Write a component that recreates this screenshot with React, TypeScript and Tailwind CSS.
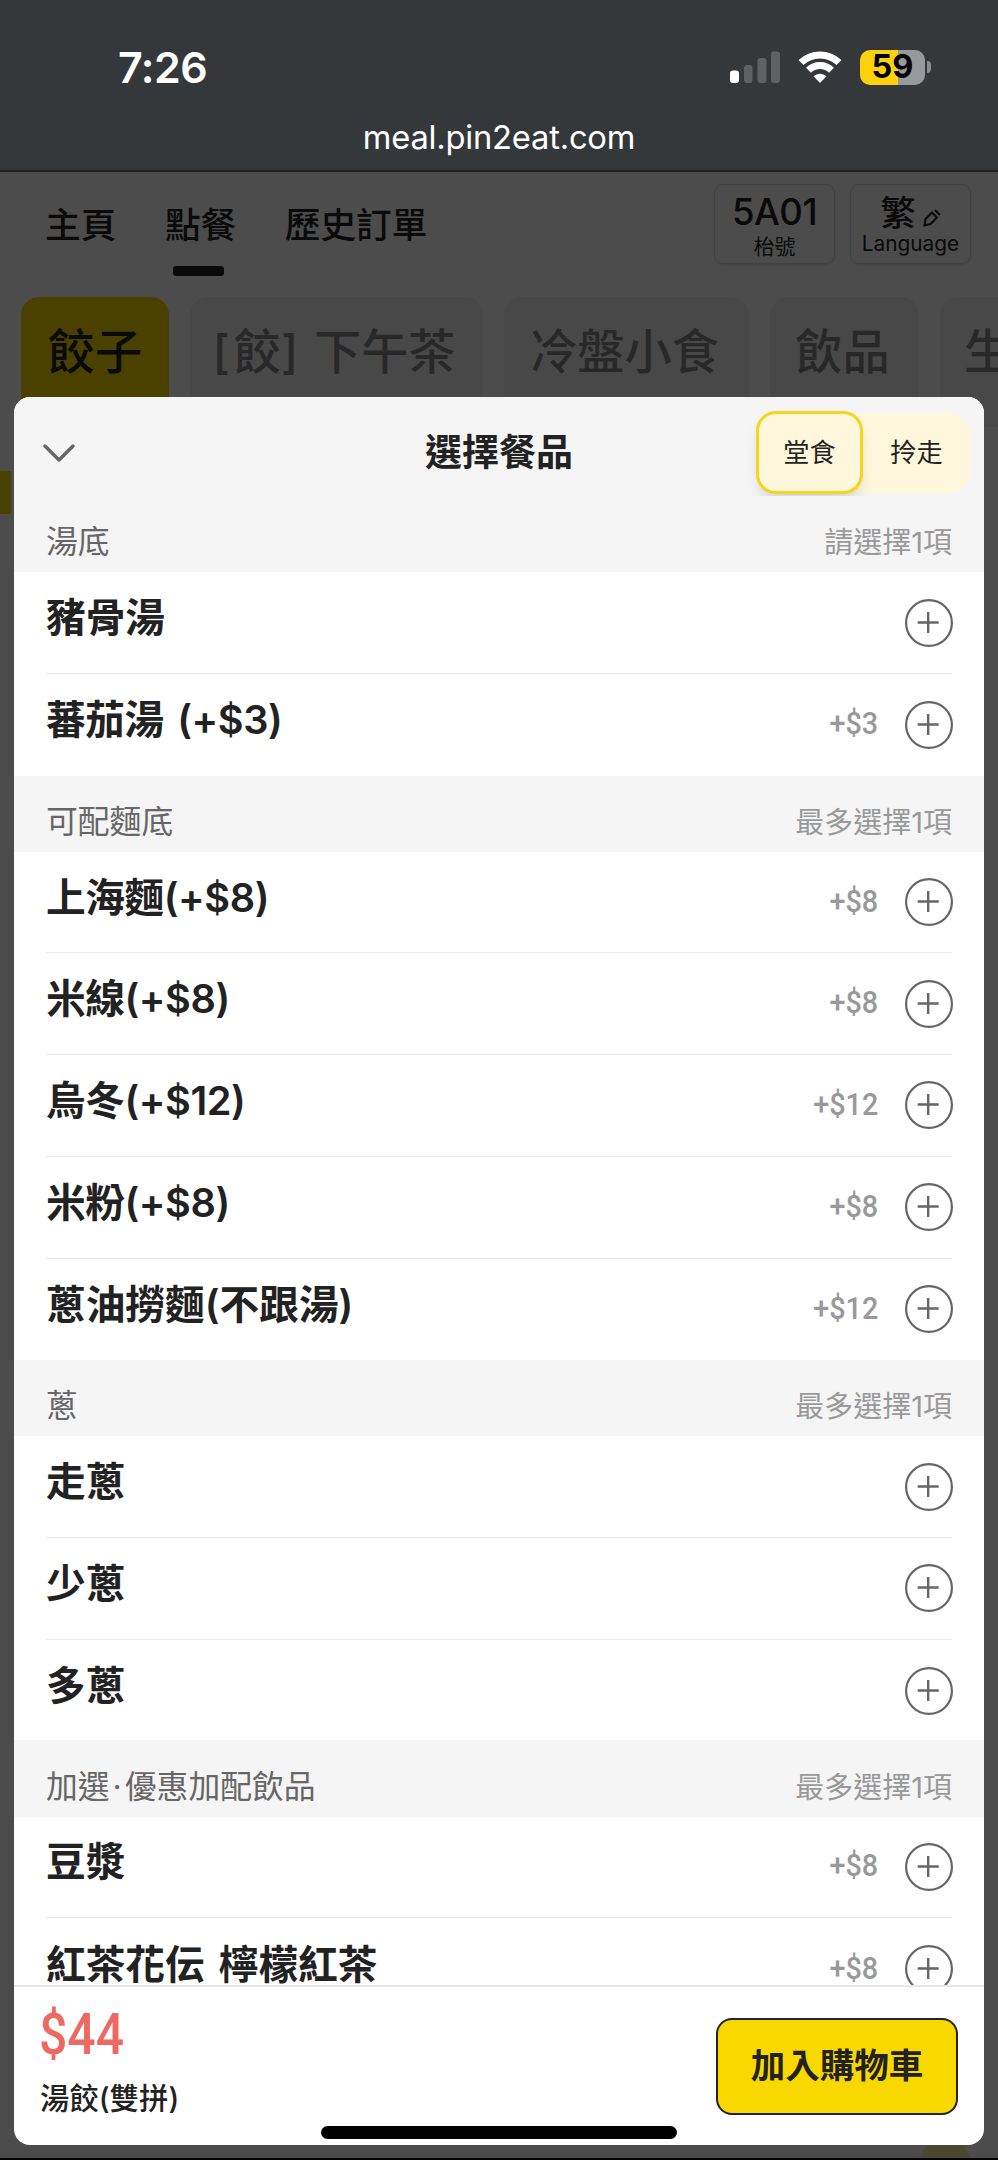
import { ChevronDown } from "lucide-react";

interface Item {
  name: string;
  price?: string;
}

interface Group {
  title: string;
  hint: string;
  items: Item[];
}

const groups: Group[] = [
  {
    title: "湯底",
    hint: "請選擇1項",
    items: [{ name: "豬骨湯" }, { name: "蕃茄湯 (+$3)", price: "+$3" }],
  },
  {
    title: "可配麵底",
    hint: "最多選擇1項",
    items: [
      { name: "上海麵(+$8)", price: "+$8" },
      { name: "米線(+$8)", price: "+$8" },
      { name: "烏冬(+$12)", price: "+$12" },
      { name: "米粉(+$8)", price: "+$8" },
      { name: "蔥油撈麵(不跟湯)", price: "+$12" },
    ],
  },
  {
    title: "蔥",
    hint: "最多選擇1項",
    items: [{ name: "走蔥" }, { name: "少蔥" }, { name: "多蔥" }],
  },
  {
    title: "加選·優惠加配飲品",
    hint: "最多選擇1項",
    items: [
      { name: "豆漿", price: "+$8" },
      { name: "紅茶花伝 檸檬紅茶", price: "+$8" },
    ],
  },
];

function StatusBar() {
  return (
    <div className="h-[172px] bg-[#34383b] border-b-2 border-[#1f2021] text-white flex flex-col">
      <div className="h-[134px] w-full flex justify-between items-center pl-[118px] pr-[67px]">
        <span className="text-[43px] font-semibold leading-none tracking-[-0.5px]">7:26</span>
        <div className="flex items-center">
          <svg width="50" height="32" viewBox="0 0 50 32" className="mr-[18px]">
            <rect x="0" y="19.5" width="9" height="12.5" rx="3" fill="#fff" />
            <rect x="14" y="14" width="8.5" height="18" rx="3" fill="#5f6264" />
            <rect x="27.5" y="7" width="9" height="25" rx="3" fill="#5f6264" />
            <rect x="41" y="0.5" width="9" height="31.5" rx="3" fill="#5f6264" />
          </svg>
          <svg width="44" height="32" viewBox="0 0 44 32" className="mr-[18px]">
            <g fill="none" stroke="#fff" strokeWidth="7">
              <path d="M3 11.5A27.5 27.5 0 0 1 41 11.5" />
              <path d="M10.5 19.2A16.5 16.5 0 0 1 33.5 19.2" />
            </g>
            <path d="M22 32l-6.500-6.700a9.500 9.500 0 0 1 13 0z" fill="#fff" />
          </svg>
          <div className="w-[65px] h-[35px] rounded-[10px] bg-[linear-gradient(to_right,#fdd20a_59%,#98999b_59%)] flex items-center justify-center text-black text-[32.5px] font-bold leading-none">
            59
          </div>
          <div className="w-[4px] h-[12px] ml-[2px] rounded-r-full bg-[#8a8c8e]" />
        </div>
      </div>
      <div className="text-center text-[32.7px] leading-[34px] -mt-[14px] tracking-[-0.2px]">meal.pin2eat.com</div>
    </div>
  );
}

function TopNav() {
  return (
    <div className="h-[125px] flex items-start text-[#222] pl-[45px] pr-[27px]">
      <div className="flex gap-[48.5px] pt-[28px] text-[35.7px] leading-[50px] font-medium">
        <span>主頁</span>
        <span className="flex flex-col items-center">
          點餐
          <i className="w-[51px] h-[10px] mt-[16px] mr-[5px] rounded-[3px] bg-[#222]" />
        </span>
        <span>歷史訂單</span>
      </div>
      <div className="flex gap-[15px] ml-auto pt-[12px]">
        <div className="w-[121px] h-[80px] rounded-[9px] border border-[#ddd] shadow flex flex-col items-center">
          <span className="text-[36.5px] leading-[54px] font-medium tracking-[-0.5px]">5A01</span>
          <span className="text-[21px] leading-[16px]">枱號</span>
        </div>
        <div className="w-[121px] h-[80px] rounded-[9px] border border-[#ddd] shadow flex flex-col items-center">
          <span className="h-[48px] flex items-center gap-[7px] text-[35.5px] leading-[50px] font-medium pt-[10px]">
            繁
            <svg width="18" height="18" viewBox="0 0 18 18" fill="none" stroke="#222" strokeWidth="2" className="mt-[8px]">
              <path d="M1.5 16.5l1-6.500 6.500-6.500 5 5-6.500 6.500zM12 1l5 5" />
            </svg>
          </span>
          <span className="text-[20.8px] leading-[22px]">Language</span>
        </div>
      </div>
    </div>
  );
}

function CategoryTabs() {
  return (
    <div className="flex h-[130px] gap-[21px] pl-[21px] overflow-hidden whitespace-nowrap text-[47.2px] font-medium text-[#888] leading-[110px]">
      <div className="flex-none w-[148px] text-center rounded-t-[18px] bg-[#f9d800] text-[#222]">餃子</div>
      <div className="flex-none w-[293px] pr-[5px] text-center rounded-t-[18px] bg-[#f2f2f2] [word-spacing:3px]">
        <span className="mr-[4px]">[</span>餃] 下午茶
      </div>
      <div className="flex-none w-[245px] pr-[4px] text-center rounded-t-[18px] bg-[#f2f2f2]">冷盤小食</div>
      <div className="flex-none w-[149px] pr-[4px] text-center rounded-t-[18px] bg-[#f2f2f2]">飲品</div>
      <div className="flex-none w-[149px] pl-[24px] rounded-t-[18px] bg-[#f2f2f2]">生</div>
    </div>
  );
}

function PlusButton() {
  return (
    <svg width="48" height="48" viewBox="0 0 48 48" fill="none" stroke="#666" strokeWidth="2.2">
      <circle cx="24" cy="24" r="22.9" />
      <path d="M12.7 23.5h21M23.2 13v21" strokeWidth="2.4" />
    </svg>
  );
}

function OptionRow({ item, last }: { item: Item; last: boolean }) {
  // names with a surcharge are mostly latin glyphs, keep them a bit tighter
  const tracking = item.name.includes("$") ? "tracking-[-0.45px]" : "";

  return (
    <div className={`h-[101.7px] flex items-center ${last ? "" : "border-b border-[#e8e8e8]"}`}>
      <span className={`text-[39.7px] leading-[60px] font-semibold text-[#222] -mt-[9px] [word-spacing:4px] ${tracking}`}>
        {item.name}
      </span>
      {item.price && (
        <span className="ml-auto -mt-[3px] inline-block origin-right scale-x-[.9] font-['Roboto'] font-medium text-[32px] text-[#999] leading-none">
          {item.price}
        </span>
      )}
      <span className={`-mr-[1px] ${item.price ? "ml-[27px]" : "ml-auto"}`}>
        <PlusButton />
      </span>
    </div>
  );
}

function OptionGroup({ group }: { group: Group }) {
  const [before, after] = group.title.split("·");

  return (
    <section className="nth-3:-mb-[1px]">
      <div className="h-[76.2px] bg-[#f5f5f5] flex items-end justify-between px-[32px] pb-[8px]">
        <span className="text-[31.8px] leading-[44px] text-[#666]">
          {before}
          {after && <span className="mx-[3px]">·</span>}
          {after}
        </span>
        <span className="text-[29px] leading-[42px] text-[#999]">{group.hint}</span>
      </div>
      <div className="px-[32px]">
        {group.items.map((item, i) => (
          <OptionRow key={item.name} item={item} last={i === group.items.length - 1} />
        ))}
      </div>
    </section>
  );
}

function OptionSheet() {
  return (
    <div className="absolute left-[14px] right-[14px] top-[397px] h-[1748px] rounded-[16px] overflow-hidden bg-white flex flex-col">
      <div className="h-[99px] flex-none bg-[#f5f5f5] grid grid-cols-3 items-center px-[14px] pt-[13px]">
        <ChevronDown size={56} strokeWidth={1.5} className="text-[#666] ml-[3px]" />
        <h1 className="text-center text-[37px] font-bold text-[#222] leading-none -mt-[2px]">選擇餐品</h1>
        <div className="justify-self-end w-[214px] h-[80px] rounded-[22px] bg-[#fff7dc] flex text-[26.2px] text-[#222]">
          <div className="w-[107px] -mt-[2px] h-[83px] rounded-[20px] border-[3px] border-[#f5d51e] bg-[#fff7dc] shadow-lg flex items-center justify-center">
            堂食
          </div>
          <div className="flex-1 flex items-center justify-center">拎走</div>
        </div>
      </div>

      <div className="flex-1 min-h-0 overflow-hidden">
        {groups.map((g) => (
          <OptionGroup key={g.title} group={g} />
        ))}
      </div>

      <div className="h-[160px] flex-none border-t-2 border-[#e8e8e8] flex justify-between pl-[25px] pr-[26px]">
        <div className="pt-[18px]">
          <div className="origin-left scale-x-[.86] font-['Roboto'] font-medium text-[58px] leading-[58px] text-[#ec6a63]">$44</div>
          <div className="mt-[16px] ml-[1px] text-[29.4px] leading-[40px] font-medium text-[#222]">湯餃(雙拼)</div>
        </div>
        <button className="mt-[31px] w-[242px] h-[97px] pb-[2px] rounded-[16px] border-2 border-[#222] bg-[#f9d800] text-[#222] text-[34.5px] font-bold">
          加入購物車
        </button>
      </div>
    </div>
  );
}

export default function App() {
  return (
    <div className="relative w-[998px] h-[2160px] overflow-hidden bg-white font-['Inter','Noto_Sans_CJK_TC',sans-serif]">
      <StatusBar />
      <div className="relative h-[1986px] bg-white overflow-hidden">
        <TopNav />
        <CategoryTabs />
        <div className="w-[11px] h-[43px] mt-[44px] bg-[#f9d800]" />
        {/* add button of the dish list under the sheet */}
        <div className="w-[54px] h-[54px] mt-[1625px] ml-auto mr-[26px] rounded-full bg-[#fbf0a0]" />
        <div className="absolute inset-0 bg-black/70" />
      </div>
      <div className="h-[2px] bg-black" />
      <OptionSheet />
      {/* home indicator */}
      <div className="absolute left-[321px] top-[2126px] w-[356px] h-[13px] rounded-full bg-black" />
    </div>
  );
}
